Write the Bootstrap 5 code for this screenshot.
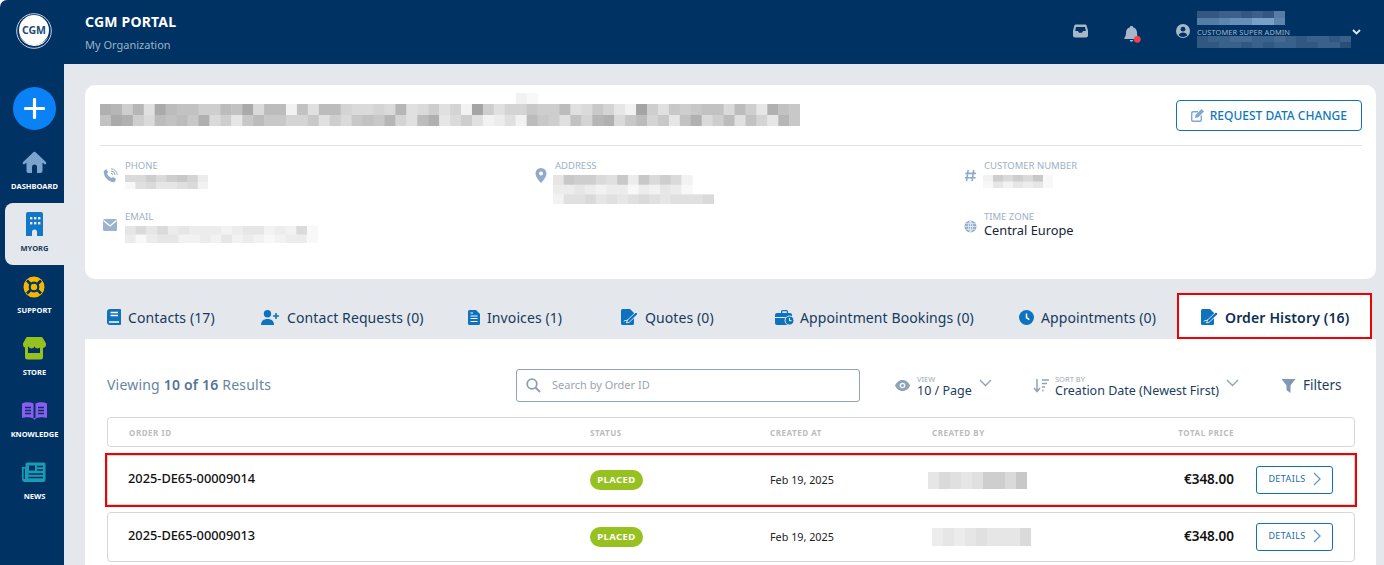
<!doctype html>
<html lang="en"><head><meta charset="utf-8"><title>CGM Portal</title>
<link href="https://cdn.jsdelivr.net/npm/bootstrap@5.3.0/dist/css/bootstrap.min.css" rel="stylesheet">
<style>
html,body{height:565px;overflow:hidden;background:#fff}
body{font-family:"Noto Sans",sans-serif;color:#17324f}
.shell{height:565px;background:#003263;border-top-left-radius:7px;overflow:hidden}
.side{width:64px;flex:none}
.logo-wrap{height:64px;padding:13px 0 0 16px}
.plus-btn{width:43px;height:43px;border-radius:50%;background:#0a82f5;margin:23px 0 11px 13px}
.nav-tile{height:62px;padding-top:9px;margin-left:5px;color:#fff;font-size:7.5px;font-weight:700;line-height:10px}
.nav-tile svg{display:block;height:24px}
.nav-tile .cap{display:block;width:64px;text-align:center;margin-left:-5px;padding-left:5px;white-space:nowrap}
.nav-tile.on{background:#e4e8ec;color:#1b3a5a;border-radius:8px 0 0 8px}
.nav-tile.on .cap{margin-left:0;padding-left:0;width:59px}
.nav-tile .ic{display:block;margin:0 auto 7px;width:59px}
.top{height:64px;padding:0 23px 0 21px}
.top-title{font-size:14px;font-weight:700;color:#fff;line-height:19px;margin-top:12px;letter-spacing:.2px}
.top-sub{font-size:11px;color:#9db3ca;line-height:16px;margin-top:6px}
.role{font-size:7.4px;line-height:10px;color:#a5b8cc;letter-spacing:.12px;margin-top:2px}
.page{background:#e4e8ec;padding:21px 8px 0 21px;height:501px}
.info{background:#fff;border-radius:10px;height:194px;padding:15px 14px 0 15px}
.req-btn{--bs-btn-padding-x:14px;--bs-btn-padding-y:0;--bs-btn-border-color:#1072b4;--bs-btn-color:#0f78bd;--bs-btn-font-size:12px;--bs-btn-border-radius:4px;height:31px;font-weight:500;display:flex;align-items:center;gap:6px}
.rule{border-top:1px solid #e3e3e3;margin:14px 0 0}
.fields{display:grid;grid-template-columns:431px 430px 1fr;grid-template-rows:51px 60px;padding:14px 0 0 3px}
.fld{display:flex;gap:7px}
.fld>svg{flex:none;margin-top:8px}
.fld-l{font-size:9.5px;line-height:11px;color:#9db0c6;text-transform:uppercase}
.fld-v{font-size:12.8px;line-height:17px;color:#14263a}
.mos{display:block}
.mos-gap{margin-top:4px}
.tabs{height:46px;margin-top:14px;position:relative}
.tabi{position:absolute;top:0;height:46px;display:flex;align-items:center;font-size:14px;padding-top:2px;color:#163a5e;white-space:nowrap;gap:6px;letter-spacing:.1px}
.tabi svg{flex:none}
.tabi.act{left:1092px;width:195px;background:#fff;outline:2px solid #f00000;outline-offset:-2px;font-weight:600;color:#0c2f55;padding-left:24px;gap:7px;letter-spacing:.15px}
.panel{background:#fff;height:240px;padding:0 21px 0 22px}
.tool{height:78px}
.view-t{font-size:14px;color:#6685a3;letter-spacing:.2px}
.view-t b{font-weight:600;color:#567493}
.sbox{position:absolute;left:409px;top:30px;width:344px;height:33px;border:1px solid #8fa3b8;border-radius:3px;display:flex;align-items:center;padding-left:9px;gap:11px;font-size:11px;color:#9aa5b1}
.toolbar-wrap{position:relative}
.tsel{position:absolute;top:30px;height:33px;display:flex;align-items:center;white-space:nowrap}
.tsel>div{padding-top:2px}
.tsel small{display:block;font-size:7.5px;line-height:8px;color:#9aa9b8}
.tsel span.v{display:block;font-size:12.5px;line-height:15px;color:#1c3e61}
.hdr,.ord{display:grid;grid-template-columns:461px 180px 162px 150px 152px 99px;align-items:center;border:1px solid #d6d6d6;border-radius:4px;padding-left:21px}
.hdr{height:30px;padding-top:1px;font-size:8px;font-weight:700;letter-spacing:.55px;color:#bcbcbc;margin-bottom:8px}
.ord{height:50px;margin-bottom:7px}
.ord-flag{outline:2px solid #f00000;border-radius:0}
.oid{font-size:12.8px;font-weight:500;color:#111;margin-bottom:3px;margin-left:-1px}
.placed{display:block;background:#97c11f;color:#fff;font-size:9.5px;font-weight:700;letter-spacing:.4px;line-height:20px;height:20px;width:53px;text-align:center;border-radius:10px}
.odate{font-size:10.8px;color:#222}
.price{font-size:13.5px;font-weight:600;color:#111;text-align:right;margin-bottom:2px}
.hprice{text-align:right}
.det-btn{--bs-btn-padding-x:0;--bs-btn-padding-y:0;--bs-btn-border-color:#1072b4;--bs-btn-color:#1a6aa8;--bs-btn-font-size:9px;--bs-btn-border-radius:3px;width:77px;height:28px;margin-left:22px;padding-bottom:2px;letter-spacing:.4px;display:flex;align-items:center;justify-content:center;gap:7px}
</style></head>
<body>
<div class="shell d-flex">
 <aside class="side">
  <div class="logo-wrap"><svg width="37" height="36" viewBox="0 0 37 36"><circle cx="18" cy="18" r="17.3" fill="none" stroke="#dfe7ef" stroke-width=".9"/><circle cx="18" cy="17" r="15" fill="#fff"/><path d="M3 22a16 16 0 0 0 30 1 17 17 0 0 1-30-1z" fill="#fff"/><text x="18" y="21" text-anchor="middle" font-family="Noto Sans" font-weight="700" font-size="10.5" fill="#1d4a78">CGM</text></svg></div>
  <div class="plus-btn d-flex align-items-center justify-content-center"><svg width="21" height="21" viewBox="0 0 21 21"><path d="M10.5 1.5v18M1.5 10.5h18" stroke="#fff" stroke-width="3.2" stroke-linecap="round"/></svg></div>

  <div class="nav-tile"><span class="ic"><svg width="59" viewBox="0 0 59 24"><path d="M21.500 12.500h16V21a2 2 0 0 1-2 2H32v-6a2.500 2.500 0 0 0-5 0v6h-3.500a2 2 0 0 1-2-2z" fill="#7aa4cb"/><path d="M19 13l10.500-10L40 13" fill="#7aa4cb" stroke="#7aa4cb" stroke-width="2.600" stroke-linecap="round" stroke-linejoin="round"/></svg></span><span class="cap">DASHBOARD</span></div>

  <div class="nav-tile on"><span class="ic"><svg width="59" viewBox="0 0 59 24"><path d="M23 0h13a2 2 0 0 1 2 2v22h-6v-4a2.500 2.500 0 0 0-5 0v4h-6V2a2 2 0 0 1 2-2z" fill="#1177c6"/><g fill="#e4e8ec"><rect x="25" y="5" width="2.400" height="2.400"/><rect x="29" y="5" width="2.400" height="2.400"/><rect x="33" y="5" width="2.400" height="2.400"/><rect x="25" y="10" width="2.400" height="2.400"/><rect x="29" y="10" width="2.400" height="2.400"/><rect x="33" y="10" width="2.400" height="2.400"/></g></svg></span><span class="cap">MYORG</span></div>

  <div class="nav-tile"><span class="ic"><svg width="59" viewBox="0 0 59 24"><circle cx="29" cy="13" r="10.500" fill="#f5b800"/><circle cx="29" cy="13" r="4.300" fill="none" stroke="#003263" stroke-width="2.200"/><path d="M22 6.500l3.500 3.500M36 6.500l-3.500 3.500M22 19.500l3.500-3.500M36 19.500l-3.500-3.500" stroke="#003263" stroke-width="2.600"/></svg></span><span class="cap">SUPPORT</span></div>

  <div class="nav-tile"><span class="ic"><svg width="59" viewBox="0 0 59 24"><path d="M20 10h18v11a2.500 2.500 0 0 1-2.500 2.500h-13A2.500 2.500 0 0 1 20 21z" fill="#97c11f"/><rect x="23" y="9" width="12" height="8" fill="#003263"/><path d="M21.500 1.500h15c1 0 1.500.4 2 1.200l3 5.300v1.500a3 3 0 0 1-5.500 1.500 3.200 3.200 0 0 1-6 0 3.200 3.200 0 0 1-6 0 3 3 0 0 1-5.500-1.500V8l2.800-5.300c.4-.8 1-1.200 2-1.200z" fill="#97c11f" transform="translate(-.5 -.5)"/></svg></span><span class="cap">STORE</span></div>

  <div class="nav-tile"><span class="ic"><svg width="59" viewBox="0 0 59 24"><g transform="translate(0 3)"><path d="M17 2.500C20 .8 25 .6 28.500 2.500V17.500C25 16 20 16 17.800 17a1 1 0 0 1-.8-.9z" fill="#8a5cf0"/><path d="M42 2.500C39 .8 34 .6 30.500 2.500V17.500C34 16 39 16 41.200 17a1 1 0 0 0 .8-.9z" fill="#8a5cf0"/><path d="M28 17l1.500 2 1.500-2z" fill="#8a5cf0"/><path d="M20 6.500h6M20 9.500h6M20 12.500h6M33 6.500h6M33 9.500h6M33 12.500h6" stroke="#003263" stroke-width="1.400"/></g></svg></span><span class="cap">KNOWLEDGE</span></div>

  <div class="nav-tile"><span class="ic"><svg width="59" viewBox="0 0 59 24"><g transform="translate(0 2)"><path d="M22 0.500h17a1.500 1.500 0 0 1 1.500 1.500v16a2 2 0 0 1-2 2H20a3 3 0 0 1-3-3V5h3.500V2a1.500 1.500 0 0 1 1.500-1.500z" fill="#1a9bb5"/><path d="M19.300 6.500v10.500" stroke="#003263" stroke-width="1.300"/><rect x="24" y="3.500" width="6" height="5" fill="#003263"/><path d="M32 4.500h6M32 8h6M23.500 12h14.500M23.500 15.500h14.500" stroke="#003263" stroke-width="1.500"/></g></svg></span><span class="cap">NEWS</span></div>
 </aside>

 <main class="flex-grow-1" style="min-width:0">
  <header class="top d-flex">
   <div class="flex-grow-1"><div class="top-title">CGM PORTAL</div><div class="top-sub">My Organization</div></div>
   <div class="d-flex align-items-start">
    <svg style="margin-top:24px" width="15" height="14" viewBox="0 0 15 14"><path d="M3 .5h9c.8 0 1.400.5 1.700 1.200l1.300 5v4.800a2 2 0 0 1-2 2H2a2 2 0 0 1-2-2V6.700l1.300-5C1.600 1 2.200.5 3 .5z" fill="#a9b8c9"/><path d="M3 3h9l.8 4H10l-1 1.800H6L5 7H2.200z" fill="#003263"/></svg>
    <svg style="margin-top:26px;margin-left:36px;margin-right:35px" width="17" height="17" viewBox="0 0 17 17"><path d="M7 0h1a1 1 0 0 1 1 1.200c2.400.6 4 2.600 4 5.300 0 3 .6 4.200 1.500 5.300.4.500 0 1.200-.6 1.200H1c-.6 0-1-.7-.6-1.200C1.300 10.700 2 9.500 2 6.500c0-2.700 1.600-4.700 4-5.300A1 1 0 0 1 7 0zM5.700 14h3.600a1.800 1.800 0 0 1-3.600 0z" fill="#a9b8c9"/><circle cx="13.300" cy="13.300" r="3.400" fill="#f5414f"/></svg>
    <svg style="margin-top:24px;margin-right:7px" width="14" height="14" viewBox="0 0 14 14"><circle cx="7" cy="7" r="7" fill="#a9b8c9"/><circle cx="7" cy="5.200" r="2.400" fill="#003263"/><path d="M2.700 11.200c.6-1.800 2.200-2.700 4.300-2.700s3.700.9 4.300 2.700A6 6 0 0 1 7 13a6 6 0 0 1-4.300-1.800z" fill="#003263"/></svg>
    <div style="margin-top:11px;width:154px">
     <span class="mos" data-w="11" data-h="7" data-c="#7f9ab8" data-r="22332326|66788aa7"></span>
     <div class="role">CUSTOMER SUPER ADMIN</div>
     <span class="mos" data-w="11" data-h="6" data-c="#315a85" data-r="23344334323323|2 2 3 3 2 3 2 3 3 2 2 3 3 1" style="margin-top:-1px"></span>
    </div>
    <svg style="margin-top:29px;margin-left:1px" width="9" height="6" viewBox="0 0 9 6"><path d="M1 1l3.500 3.500L8 1" fill="none" stroke="#dfe6ee" stroke-width="1.800"/></svg>
   </div>
  </header>

  <div class="page">
   <section class="info">
    <div class="d-flex justify-content-between align-items-start" style="height:31px">
     <span class="mos" style="margin-top:-7px" data-w="10.94" data-h="11" data-r="--------------------------------------ef------------------------|3484b2566885 62a55e6b5 59aa9a4 ba8b9e1 8b9 9 7 8 8 5 b a 7 9 c e 1 8 b 7 8 7 6 6 a58c367|62 38 a 5 6 5 7 3 a 8 c 7 5 7 7 9 9 7 b 8 a 7 6 7 4 9 b 5 3 c a 8 b e d b e 5 7 8 b 6 9 4 3 a7597c63a85b69c47"></span>
     <button type="button" class="btn btn-outline-primary req-btn bg-white"><svg width="13" height="13" viewBox="0 0 13 13"><path d="M2 2h5v1.400H2.300a.9.900 0 0 0-.9.900v6.400c0 .5.400.9.900.9h6.400c.5 0 .9-.4.900-.9V6.500H11V11a2 2 0 0 1-2 2H2a2 2 0 0 1-2-2V4a2 2 0 0 1 2-2z" fill="#7ea8cf"/><path d="M10.500 0L13 2.500 7 8.500 4 9l.5-3z" fill="#7ea8cf"/></svg>REQUEST DATA CHANGE</button>
    </div>
    <div class="rule"></div>
    <div class="fields">
     <div class="fld"><svg width="15" height="15" viewBox="0 0 15 15"><path d="M3.200 1l1.900 2.900-1 1.600c.6 2 2.300 3.800 4.400 4.400l1.600-1L13 10.800l-1 2.700c-.3.600-.9.800-1.600.7C5 13.300 1.400 9.600.7 4.300.6 3.500.9 2.800 1.600 2.500z" fill="#8fabc9"/><path d="M8 3a4 4 0 0 1 4 4M8 .8A6.200 6.200 0 0 1 14.200 7M8 5.300A1.700 1.700 0 0 1 9.700 7" fill="none" stroke="#8fabc9" stroke-width="1"/></svg>
      <div><div class="fld-l">Phone</div><span class="mos mos-gap" data-w="10.4" data-h="7" data-r="a a 8 a 8 7 9 d|f b a c c b a e"></span></div></div>
     <div class="fld"><svg width="14" height="15" viewBox="0 0 14 15"><path d="M7 0a5.500 5.500 0 0 1 5.500 5.500C12.500 9 8.500 13.500 7 15 5.500 13.500 1.500 9 1.500 5.500A5.500 5.500 0 0 1 7 0z" fill="#8fabc9"/><circle cx="7" cy="5.500" r="2" fill="#fff"/></svg>
      <div><div class="fld-l">Address</div><span class="mos mos-gap" data-w="10.7" data-h="9.7" style="margin-left:-2px" data-r="c 7 8 8 a b 7 d 7 a 8 a e|d d c d e d d f d e c d f|e b b a c b c b a b c b b b a"></span></div></div>
     <div class="fld"><svg width="13" height="15" viewBox="0 0 14 15"><path d="M4.500 1.500l-1.800 12M10.500 1.500l-1.800 12M1.500 5.200h11.500M1 10h11.500" stroke="#8fabc9" stroke-width="1.700" fill="none"/></svg>
      <div><div class="fld-l">Customer Number</div><span class="mos mos-gap" data-w="10" data-h="6.500" style="margin-left:-1px" data-r="e 8 a 8 a 7 f|f c e c d c f"></span></div></div>
     <div class="fld"><svg width="15" height="13" viewBox="0 0 15 13"><rect y="0" width="14" height="12" rx="1.500" fill="#9db3cd"/><path d="M.5 1.500L7 7l6.500-5.500" fill="none" stroke="#fff" stroke-width="1.200"/></svg>
      <div><div class="fld-l">Email</div><span class="mos mos-gap" data-w="10.7" data-h="8.500" data-r="c a c a d c d d d e d c c e d e a f|d f d c c e e d e c e d e f e d d f"></span></div></div>
     <div></div>
     <div class="fld"><svg width="13" height="15" viewBox="0 0 14 14"><circle cx="7" cy="7" r="6.500" fill="#8fabc9"/><path d="M.5 7h13M1.500 4h11M1.500 10h11M7 .5C4 3 4 11 7 13.500M7 .5c3 2.500 3 10.500 0 13M7 .5v13" stroke="#fff" stroke-width=".7" fill="none"/></svg>
      <div><div class="fld-l">Time Zone</div><div class="fld-v">Central Europe</div></div></div>
    </div>
   </section>

   <nav class="tabs">
    <div class="tabi" style="left:22px"><svg width="15" height="16" viewBox="0 0 15 16"><path d="M3 0h10a1 1 0 0 1 1 1v14a1 1 0 0 1-1 1H3a3 3 0 0 1-3-3V3a3 3 0 0 1 3-3z" fill="#0f72bd"/><path d="M3.500 3.500h7.500M3.500 6.500h7.500M2 13h10" stroke="#fff" stroke-width="1.300"/></svg>Contacts (17)</div>
    <div class="tabi" style="left:176px;gap:8px"><svg width="18" height="15" viewBox="0 0 18 15"><circle cx="6.500" cy="3.700" r="3.700" fill="#0f72bd"/><path d="M0 15c0-4 2.500-6 6.500-6s6.500 2 6.500 6z" fill="#0f72bd"/><path d="M15 3v6M12 6h6" stroke="#0f72bd" stroke-width="1.600"/></svg>Contact Requests (0)</div>
    <div class="tabi" style="left:383px;gap:7px"><svg width="12" height="15" viewBox="0 0 12 15"><path d="M1.500 0H8l4 4v9.500a1.500 1.500 0 0 1-1.500 1.500h-9A1.500 1.500 0 0 1 0 13.500v-12A1.500 1.500 0 0 1 1.500 0z" fill="#0f72bd"/><path d="M2.500 3h2.500M2.500 6h7M2.500 8.500h7M2.500 11.500h7" stroke="#fff" stroke-width="1.100"/></svg>Invoices (1)</div>
    <div class="tabi" style="left:536px;gap:7px"><svg width="17" height="16" viewBox="0 0 17 16"><path d="M1.500 0H9l4 4v10.500a1.500 1.500 0 0 1-1.500 1.500h-10A1.500 1.500 0 0 1 0 14.500v-13A1.500 1.500 0 0 1 1.500 0z" fill="#0f72bd"/><path d="M3 12.500c1-2 1.500-.5 2.500-1s1-1.200 2-.3" stroke="#fff" stroke-width="1" fill="none"/><path d="M15 3l2 2-8.500 8-3 1 1-3z" fill="#0f72bd" stroke="#fff" stroke-width=".8"/></svg>Quotes (0)</div>
    <div class="tabi" style="left:690px;gap:6px"><svg width="19" height="15" viewBox="0 0 19 15"><path d="M6 3V1.500A1.500 1.500 0 0 1 7.500 0h4A1.500 1.500 0 0 1 13 1.500V3h2a2 2 0 0 1 2 2v2H0V5a2 2 0 0 1 2-2zM7.300 3h4.400V1.300H7.300zM0 8h17v5a2 2 0 0 1-2 2H2a2 2 0 0 1-2-2z" fill="#0f72bd"/><circle cx="14.500" cy="10.500" r="4.500" fill="#0f72bd" stroke="#e4e8ec"/><path d="M14.500 8v2.700h2" stroke="#fff" fill="none"/></svg>Appointment Bookings (0)</div>
    <div class="tabi" style="left:934px;gap:7px"><svg width="15" height="15" viewBox="0 0 15 15"><circle cx="7.500" cy="7.500" r="7.500" fill="#0f72bd"/><path d="M7.500 3.500v4.200l2.800 2" stroke="#fff" stroke-width="1.500" fill="none"/></svg>Appointments (0)</div>
    <div class="tabi act"><svg width="17" height="16" viewBox="0 0 17 16"><path d="M1.500 0H9l4 4v10.500a1.500 1.500 0 0 1-1.500 1.500h-10A1.500 1.500 0 0 1 0 14.500v-13A1.500 1.500 0 0 1 1.500 0z" fill="#0f72bd"/><path d="M3 12.500c1-2 1.500-.5 2.500-1s1-1.200 2-.3" stroke="#fff" stroke-width="1" fill="none"/><path d="M15 3l2 2-8.500 8-3 1 1-3z" fill="#0f72bd" stroke="#fff" stroke-width=".8"/></svg>Order History (16)</div>
   </nav>

   <section class="panel">
    <div class="tool toolbar-wrap d-flex align-items-start">
     <div class="view-t" style="margin-top:36px;line-height:20px">Viewing <b>10 of 16</b> Results</div>
     <div class="sbox"><svg width="15" height="15" viewBox="0 0 15 15"><circle cx="6" cy="6" r="4.800" fill="none" stroke="#8a9fb5" stroke-width="1.800"/><path d="M9.500 9.500l4.500 4.500" stroke="#8a9fb5" stroke-width="2"/></svg>Search by Order ID</div>
     <div class="tsel" style="left:788px"><svg style="margin-right:7px" width="15" height="11" viewBox="0 0 15 11"><path d="M7.500 0C11 0 13.800 2.500 15 5.500 13.800 8.500 11 11 7.500 11S1.200 8.500 0 5.500C1.200 2.500 4 0 7.500 0z" fill="#8fa3b8"/><circle cx="7.500" cy="5.500" r="2.800" fill="#fff"/><circle cx="7.500" cy="5.500" r="1.500" fill="#8fa3b8"/></svg><div><small>VIEW</small><span class="v">10 / Page</span></div><svg style="margin-left:7px;margin-bottom:6px" width="13" height="8" viewBox="0 0 13 8"><path d="M1 1l5.500 5.500L12 1" fill="none" stroke="#8fa3b8" stroke-width="1.400"/></svg></div>
     <div class="tsel" style="left:926px"><svg style="margin-right:6px" width="16" height="14" viewBox="0 0 16 14"><path d="M4 0v12M1 9l3 3.500L7 9" fill="none" stroke="#8fa3b8" stroke-width="1.500"/><path d="M9 1h7M9 4.500h5M9 8h3M9 11.500h1.500" stroke="#8fa3b8" stroke-width="1.500"/></svg><div><small>SORT BY</small><span class="v">Creation Date (Newest First)</span></div><svg style="margin-left:7px;margin-bottom:6px" width="13" height="8" viewBox="0 0 13 8"><path d="M1 1l5.500 5.500L12 1" fill="none" stroke="#8fa3b8" stroke-width="1.400"/></svg></div>
     <div class="tsel" style="left:1174px;font-size:13.5px;color:#1c3e61;gap:7px"><svg width="15" height="14" viewBox="0 0 15 14"><path d="M.5 0h14L9.500 6.500V14l-4-3V6.500z" fill="#7f98b3"/></svg>Filters</div>
    </div>
    <div class="hdr"><div>ORDER ID</div><div>STATUS</div><div>CREATED AT</div><div>CREATED BY</div><div class="hprice">TOTAL PRICE</div><div></div></div>
    <div class="ord ord-flag"><div class="oid">2025-DE65-00009014</div><div><span class="placed">PLACED</span></div><div class="odate">Feb 19, 2025</div><div><span class="mos" style="margin-left:-4px" data-w="11" data-h="17" data-r="c a b c b 8 8 a 7"></span></div><div class="price">€348.00</div><div><button type="button" class="btn btn-outline-primary det-btn bg-white">DETAILS<svg width="8" height="14" viewBox="0 0 8 14"><path d="M1 1l6 6-6 6" fill="none" stroke="#5f9bcc" stroke-width="1.300"/></svg></button></div></div>
    <div class="ord"><div class="oid">2025-DE65-00009013</div><div><span class="placed">PLACED</span></div><div class="odate">Feb 19, 2025</div><div><span class="mos" data-w="11" data-h="18" data-r="d c d c b c c c a"></span></div><div class="price">€348.00</div><div><button type="button" class="btn btn-outline-primary det-btn bg-white">DETAILS<svg width="8" height="14" viewBox="0 0 8 14"><path d="M1 1l6 6-6 6" fill="none" stroke="#5f9bcc" stroke-width="1.300"/></svg></button></div></div>
   </section>
  </div>
 </main>
</div>
<script>
document.querySelectorAll('.mos').forEach(function(el){
  var w=+el.dataset.w,h=+el.dataset.h,rows=el.dataset.r.split('|').map(function(r){return r.replace(/\s/g,'')});
  var cols=Math.max.apply(null,rows.map(function(r){return r.length}));
  var base=el.dataset.c;
  var s='<svg width="'+Math.round(cols*w)+'" height="'+(rows.length*h)+'" class="mos">';
  rows.forEach(function(r,y){for(var x=0;x<r.length;x++){if(r[x]==='-')continue;var d=parseInt(r[x],16);var col;
    if(base){var v=d*9;col='rgb('+(30+v)+','+(70+v)+','+(110+v)+')';}
    else{var g=158+d*6;col='rgb('+g+','+g+','+g+')';}
    s+='<rect x="'+x*w+'" y="'+y*h+'" width="'+(w+.5)+'" height="'+(h+.5)+'" fill="'+col+'"/>';}});
  el.innerHTML=s+'</svg>';
});
</script>
</body></html>
